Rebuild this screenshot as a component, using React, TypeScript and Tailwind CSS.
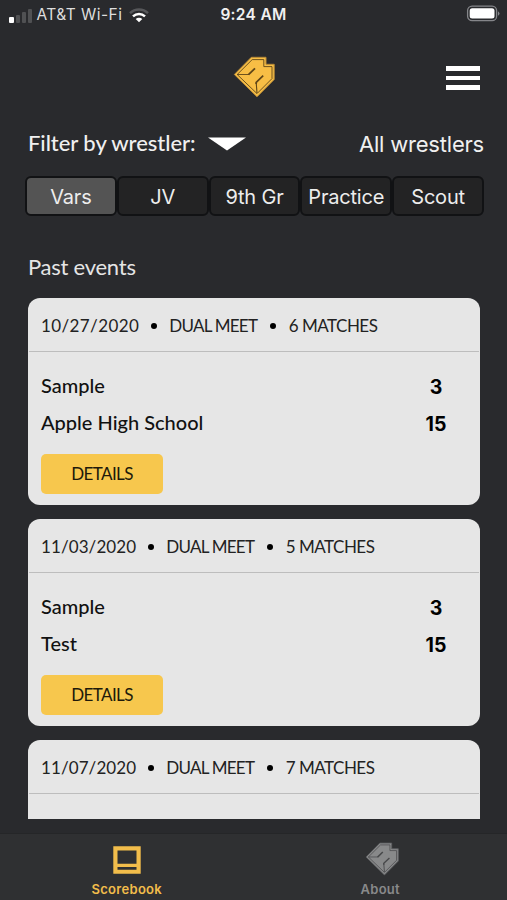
import { clsx } from "clsx";

const filters = ["Vars", "JV", "9th Gr", "Practice", "Scout"];

const events = [
  { date: "10/27/2020", matches: 6, teams: [{ name: "Sample", score: 3 }, { name: "Apple High School", score: 15 }] },
  { date: "11/03/2020", matches: 5, teams: [{ name: "Sample", score: 3 }, { name: "Test", score: 15 }] },
  { date: "11/07/2020", matches: 7, teams: [] },
];

function Logo({ className, rim, line }: { className: string; rim: string; line: string }) {
  return (
    <svg viewBox="0 0 42 42" className={className} fill="none">
      <path d="M1.3 18.5 18.3 1.3H33v7h8.2v15.2L24 40.8Z" fill="currentColor" stroke={rim} strokeWidth="1" />
      <path d="M4.2 18.5 19.2 3.6H30.8v7H39v12L24 37.6Z" stroke={line} strokeWidth="0.9" />
      <path d="M4 18.5h12" stroke={line} strokeWidth="0.9" />
      <path d="m15.5 18.7 6.5-6.4" stroke={line} strokeWidth="1.8" />
      <path d="m24 37-.8-10.5" stroke={line} strokeWidth="1.1" />
      <path d="M23.2 28v-1.7l7-6.6" stroke={line} strokeWidth="1.7" />
    </svg>
  );
}

function StatusBar() {
  return (
    <div className="relative flex h-[30px] items-center text-[15.5px] text-[#dedede]">
      <div className="ml-[9px] flex h-[15px] items-end gap-[2px]">
        <span className="h-[6px] w-[4.5px] rounded-[1px] bg-white" />
        <span className="h-[8px] w-[4px] rounded-[1px] bg-[#505153]" />
        <span className="h-[11px] w-[4px] rounded-[1px] bg-[#505153]" />
        <span className="h-[14px] w-[4px] rounded-[1px] bg-[#505153]" />
      </div>
      <span className="ml-[5px] w-[86px] tracking-[0.45px] whitespace-nowrap">AT&amp;T Wi-Fi</span>
      <svg viewBox="0 0 20 15" className="ml-[6px] h-[15px] w-5" fill="none">
        <path d="M1 5.2C6 .2 14 .2 19 5.2" stroke="#56575a" strokeWidth="2.4" />
        <path d="M4 8.3c3.4-3.2 8.6-3.2 12 0" stroke="#fff" strokeWidth="2.5" />
        <path d="M6.7 11c1.9-1.7 4.7-1.7 6.6 0L10 14.3Z" fill="#fff" />
      </svg>
      <span className="absolute inset-x-0 text-center font-semibold tracking-[0.3px] text-[#f0f0f0]">9:24 AM</span>
      <svg viewBox="0 0 34 18" className="absolute top-[5px] left-[466px] h-[18px] w-[34px]">
        <rect x="1.6" y="1.1" width="29" height="14.6" rx="4.5" fill="none" stroke="#85868a" strokeWidth="1.3" />
        <rect x="3.7" y="3.2" width="24.8" height="10.4" rx="2.5" fill="#fff" />
        <path d="M32 6.2q3 2.3 0 4.6Z" fill="#85868a" />
      </svg>
    </div>
  );
}

function EventCard({ date, matches, teams }: (typeof events)[number]) {
  return (
    <article className="h-[207px] shrink-0 overflow-hidden rounded-xl bg-[#e6e6e6] text-[#111]">
      <header className="mx-px flex h-[54px] items-center border-b border-[#bdbdbd] pt-[2px] pl-3 text-[17px] whitespace-nowrap text-[#222]">
        <span className={date.startsWith("10") ? "tracking-[0.4px]" : "tracking-[0.1px]"}>{date}</span>
        <span className="mr-[12px] ml-[12px] size-[6px] rounded-full bg-black" />
        <span className="tracking-[-0.75px]">DUAL MEET</span>
        <span className="mr-[12.5px] ml-[13px] size-[6px] rounded-full bg-black" />
        <span className="tracking-[-0.5px]">{matches} MATCHES</span>
      </header>
      {teams.length > 0 && (
        <>
          <div className="pt-[15px] pr-[29px] pl-[13px] text-[20px] leading-[36.5px]">
            {teams.map((team) => (
              <div key={team.name} className="flex h-[36.5px] justify-between">
                <span className="font-medium">{team.name}</span>
                <span className="w-[30px] pt-[2px] text-center font-['Inter',sans-serif] text-[19.5px] font-bold text-black">
                  {team.score}
                </span>
              </div>
            ))}
          </div>
          <button className="mt-[14px] ml-[13px] h-10 w-[122px] rounded-[5px] bg-[#f7c74d] text-[17px] tracking-[-0.6px] text-[#20190a]">
            DETAILS
          </button>
        </>
      )}
    </article>
  );
}

export default function App() {
  return (
    <div className="flex h-[900px] w-[507px] flex-col overflow-hidden bg-[#292a2d] font-['Inter',sans-serif]">
      <StatusBar />

      <div className="grid h-[90px] grid-cols-3 items-center">
        <Logo
          className="col-start-2 mt-[4px] size-[42px] justify-self-center text-[#f7be45]"
          rim="#b88a38"
          line="#5e4518"
        />
        <div className="mt-[6px] mr-[27px] flex w-[34px] flex-col gap-[5px] justify-self-end">
          <span className="h-[4.5px] bg-white" />
          <span className="h-[4.5px] bg-white" />
          <span className="h-[4.5px] bg-white" />
        </div>
      </div>

      <div className="flex h-12 items-center pr-[23px] pl-[28px] text-[22px] text-[#f0f0f0]">
        <span className="-mt-[3px] w-[168px] font-['Lato',sans-serif] font-medium tracking-[-0.05px] whitespace-nowrap">
          Filter by wrestler:
        </span>
        <svg viewBox="0 0 38 14" className="ml-[12px] h-[14px] w-[38px]">
          <path d="M0 .5h38L19 13.5Z" fill="#fff" />
        </svg>
        <span className="ml-auto tracking-[-0.2px]">All wrestlers</span>
      </div>

      <div className="mt-2 mr-[23px] ml-[25px] flex h-[40px]">
        {filters.map((name, i) => (
          <button
            key={name}
            className={clsx(
              "flex-1 rounded-[6px] border-2 border-[#111214] pt-px text-[20px] tracking-[-0.2px] whitespace-nowrap text-[#ededed]",
              i === 0 ? "bg-[#545454]" : "bg-[#232324]",
            )}
          >
            {name}
          </button>
        ))}
      </div>

      <main className="h-[603px] shrink-0 overflow-hidden pr-[27px] pl-[28px] font-['Lato',sans-serif]">
        <h2 className="mt-[35px] h-[47px] text-[22px] leading-8 tracking-[-0.25px] text-[#e5e5e5]">Past events</h2>
        <div className="flex flex-col gap-[14px]">
          {events.map((event) => (
            <EventCard key={event.date} {...event} />
          ))}
        </div>
      </main>

      <nav className="mt-[14px] grid h-[67px] shrink-0 grid-cols-2 border-t border-[#252628] bg-[#2f3032] text-[13px] font-semibold tracking-[0.3px]">
        <div className="flex flex-col items-center pt-[12px] text-[#f2bd4b]">
          <svg viewBox="0 0 28 28" className="size-7">
            <path fill="currentColor" fillRule="evenodd" d="M.3.3h27.4v27.4H.3ZM4.5 4.5v13.3h19V4.5Zm0 16.5v2.8h19V21Z" />
          </svg>
          <span className="mt-[6px]">Scorebook</span>
        </div>
        <div className="flex flex-col items-center pt-[8px] text-[#88898a]">
          <Logo className="ml-[3px] size-[34px]" rim="#5c5d5f" line="#47484a" />
          <span className="mt-[4px]">About</span>
        </div>
      </nav>
    </div>
  );
}
